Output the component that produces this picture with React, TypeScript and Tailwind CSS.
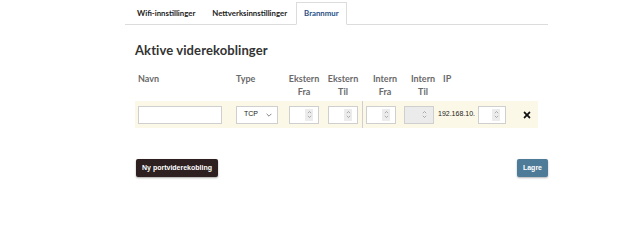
import { FaTimes } from 'react-icons/fa'

function Spin() {
  return (
    <div className="flex h-[12px] w-[8px] flex-col items-center justify-center bg-[#ececec]">
      <svg width="5" height="9" viewBox="0 0 5 9" fill="none" stroke="#9a9a9a" strokeWidth="0.8">
        <path d="M0.8 3.2 L2.5 1.5 L4.2 3.2" />
        <path d="M0.8 5.8 L2.5 7.5 L4.2 5.8" />
      </svg>
    </div>
  )
}

function NumBox({ disabled = false, w = 'w-[30px]' }: { disabled?: boolean; w?: string }) {
  return (
    <div
      className={`flex h-[18px] ${w} items-center justify-end border border-[#cfcfcf] pr-[5px] ${
        disabled ? 'bg-[#ebebeb]' : 'bg-white'
      }`}
    >
      <Spin />
    </div>
  )
}

const tabs = ['Wifi-innstillinger', 'Nettverksinnstillinger', 'Brannmur']

export default function App() {
  return (
    <div className="min-h-[205px] w-[624px] bg-white font-['Lato',sans-serif]">
      <div className="ml-[125px] w-[423px] pt-[2px]">
        <ul className="flex border-b border-[#dcdcdc] pl-[4px]">
          {tabs.map((t, i) => (
            <li
              key={t}
              className={`-mb-px mr-[1px] flex h-[23px] items-center px-[7px] text-[7.8px] font-bold ${
                i === 2
                  ? 'border border-b-white border-[#dcdcdc] bg-white text-[#1f4f86]'
                  : 'border border-transparent text-[#222]'
              }`}
            >
              {t}
            </li>
          ))}
        </ul>

        <div className="px-[10px]">
          <h2 className="mt-[17px] text-[13px] leading-[16px] font-bold tracking-[0.1px] text-[#333]">
            Aktive viderekoblinger
          </h2>

          <div className="mt-[14px] flex pl-[3px] text-[9px] leading-[13px] font-bold text-[#6a6a6a]">
            <div className="w-[84px]">Navn</div>
            <div className="ml-[14px] w-[42px]">Type</div>
            <div className="ml-[11px] w-[30px] text-center whitespace-nowrap">
              <div className="-mx-[8px]">Ekstern</div>
              <div>Fra</div>
            </div>
            <div className="ml-[9px] w-[30px] text-center">
              <div className="-mx-[8px]">Ekstern</div>
              <div>Til</div>
            </div>
            <div className="ml-[8px] w-px" />
            <div className="ml-[3px] w-[30px] text-center">
              <div className="-mx-[8px]">Intern</div>
              <div>Fra</div>
            </div>
            <div className="ml-[8px] w-[30px] text-center">
              <div className="-mx-[8px]">Intern</div>
              <div>Til</div>
            </div>
            <div className="ml-[5px]">IP</div>
          </div>

          <div className="mt-[3px] flex h-[27px] items-center bg-[#fcf8e7] pl-[3px]">
            <div className="h-[18px] w-[84px] border border-[#cfcfcf] bg-white" />
            <div className="ml-[14px] flex h-[18px] w-[42px] items-center justify-between border border-[#cfcfcf] bg-white pr-[5px] pl-[7px] font-['Liberation_Sans',sans-serif] text-[7px] text-[#222]">
              <span>TCP</span>
              <svg width="6" height="4" viewBox="0 0 6 4" fill="none" stroke="#777" strokeWidth="0.9">
                <path d="M0.6 0.8 L3 3.2 L5.4 0.8" />
              </svg>
            </div>
            <div className="ml-[11px]">
              <NumBox />
            </div>
            <div className="ml-[9px]">
              <NumBox />
            </div>
            <div className="ml-[4px] h-full w-px bg-[#cfcfcf]" />
            <div className="ml-[3px]">
              <NumBox />
            </div>
            <div className="ml-[8px]">
              <NumBox disabled />
            </div>
            <span className="ml-[4px] w-[40px] font-['Liberation_Sans',sans-serif] text-[7px] text-[#222]">
              192.168.10.
            </span>
            <NumBox w="w-[28px]" />
            <FaTimes className="ml-[16px] text-[10px] text-[#111]" />
          </div>

          <div className="mt-[31px] flex justify-between pl-[1px] font-['Liberation_Sans',sans-serif] text-[7px] font-bold text-white">
            <button className="h-[18px] rounded-[2px] bg-[#2e2020] px-[6px] shadow-[0_1px_2px_rgba(0,0,0,0.35)]">
              Ny portviderekobling
            </button>
            <button className="-mr-[10px] h-[18px] rounded-[2px] bg-[#4e7b98] px-[6px] shadow-[0_1px_2px_rgba(0,0,0,0.3)]">
              Lagre
            </button>
          </div>
        </div>
      </div>
    </div>
  )
}
